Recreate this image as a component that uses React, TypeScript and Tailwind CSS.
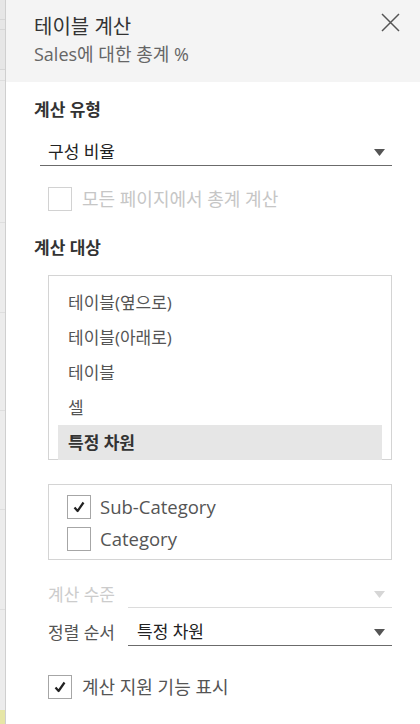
import React from "react";

const font = "font-['Open_Sans','Noto_Sans_CJK_KR',sans-serif]";

function Arrow({ disabled }: { disabled?: boolean }) {
  return (
    <svg width="11" height="7" viewBox="0 0 11 7" className="shrink-0">
      <path d="M0 0 H11 L5.5 7 Z" fill={disabled ? "#d6d6d6" : "#555555"} />
    </svg>
  );
}

function Checkbox({ checked, disabled }: { checked?: boolean; disabled?: boolean }) {
  return (
    <span
      className={
        "flex h-[24px] w-[24px] shrink-0 items-center justify-center border bg-white " +
        (disabled ? "border-[#d2d2d2]" : "border-[#a6a6a6]")
      }
    >
      {checked ? (
        <svg width="14" height="14" viewBox="0 0 14 14">
          <path d="M2.5 7.5 L5.6 11 L11.5 2.5" fill="none" stroke="#222" strokeWidth="2.2" strokeLinejoin="round" />
        </svg>
      ) : null}
    </span>
  );
}

const listItems = ["테이블(옆으로)", "테이블(아래로)", "테이블", "셀", "특정 차원"];

export default function App() {
  return (
    <div className={`flex h-[724px] w-[420px] overflow-hidden bg-white ${font}`}>
      {/* background sheet peeking out on the left */}
      <div className="flex w-[6px] shrink-0 flex-col border-r border-[#cfcfcf] bg-[#ececec]">
        <div className="h-[20px] border-b border-[#d6d6d6] bg-[#e6e6e6]" />
        <div className="h-[10px] border-b border-[#d6d6d6] bg-[#e6e6e6]" />
        <div className="h-[40px] border-b border-[#d6d6d6] bg-[#e6e6e6]" />
        <div className="h-[11px] border-b border-[#dedede]" />
        <div className="h-[142px] border-b border-[#dedede]" />
        <div className="h-[90px] border-b border-[#dedede]" />
        <div className="h-[98px] border-b border-[#dedede]" />
        <div className="h-[99px] border-b border-[#dedede]" />
        <div className="h-[100px] border-b border-[#dedede]" />
        <div className="h-[100px]" />
        <div className="flex-1 bg-[#e6e6a6]" />
      </div>

      <div className="flex flex-1 flex-col">
        <header className="flex h-[82px] shrink-0 justify-between bg-[#f4f4f4] pl-[28px] pr-[20px]">
          <div className="flex flex-col">
            <h1 className="mt-[14px] text-[20px] leading-[26px] text-[#333333]">테이블 계산</h1>
            <p className="mt-[2px] text-[18px] leading-[24px] text-[#666666]">Sales에 대한 총계 %</p>
          </div>
          <button type="button" className="mt-[13px] h-[19px] w-[19px]">
            <svg width="19" height="19" viewBox="0 0 19 19">
              <path d="M1 1 L18 18 M18 1 L1 18" stroke="#555555" strokeWidth="1.5" />
            </svg>
          </button>
        </header>

        <div className="flex flex-col px-[28px]">
          <h2 className="mt-[18px] h-[20px] text-[17px] font-bold leading-[20px] text-[#333333]">계산 유형</h2>

          <div className="ml-[6px] mt-[16px] flex h-[30px] items-center justify-between border-b border-[#6b6b6b] pl-[8px] pr-[7px] pt-[3px]">
            <span className="text-[17px] leading-[22px] text-[#222222]">구성 비율</span>
            <Arrow />
          </div>

          <label className="ml-[14px] mt-[21px] flex items-center gap-[10px]">
            <Checkbox disabled />
            <span className="text-[18px] leading-[22px] text-[#c6c6c6]">모든 페이지에서 총계 계산</span>
          </label>

          <h2 className="mt-[27px] h-[20px] text-[17px] font-bold leading-[20px] text-[#333333]">계산 대상</h2>

          <ul className="ml-[14px] mt-[17px] flex h-[185px] flex-col border border-[#d4d4d4] px-[9px] pt-[9px]">
            {listItems.map((item, i) => {
              const selected = i === listItems.length - 1;
              return (
                <li
                  key={item}
                  className={
                    "flex h-[35px] shrink-0 items-center px-[10px] text-[17px] " +
                    (selected ? "h-[34px] bg-[#e6e6e6] font-bold text-[#333333]" : "text-[#555555]")
                  }
                >
                  {item}
                </li>
              );
            })}
          </ul>

          <div className="ml-[14px] mt-[24px] flex h-[76px] flex-col border border-[#d4d4d4] pl-[18px] pt-[6px]">
            {[
              { label: "Sub-Category", checked: true },
              { label: "Category", checked: false },
            ].map((row) => (
              <label key={row.label} className="flex h-[32px] items-center gap-[9px]">
                <Checkbox checked={row.checked} />
                <span className="text-[18.5px] leading-[22px] text-[#555555]">{row.label}</span>
              </label>
            ))}
          </div>

          <div className="ml-[14px] mt-[18px] flex h-[30px] items-stretch">
            <span className="flex w-[80px] items-center pt-[3px] text-[17px] text-[#cccccc]">계산 수준</span>
            <div className="flex flex-1 items-center justify-end border-b border-[#dcdcdc] pr-[7px] pt-[3px]">
              <Arrow disabled />
            </div>
          </div>

          <div className="ml-[14px] mt-[8px] flex h-[30px] items-stretch">
            <span className="flex w-[80px] items-center pt-[3px] text-[17px] text-[#555555]">정렬 순서</span>
            <div className="flex flex-1 items-center justify-between border-b border-[#6b6b6b] pl-[9px] pr-[7px] pt-[3px]">
              <span className="text-[17px] leading-[22px] text-[#222222]">특정 차원</span>
              <Arrow />
            </div>
          </div>

          <label className="ml-[14px] mt-[29px] flex items-center gap-[10px]">
            <Checkbox checked />
            <span className="text-[18px] leading-[22px] text-[#555555]">계산 지원 기능 표시</span>
          </label>
        </div>
      </div>
    </div>
  );
}
